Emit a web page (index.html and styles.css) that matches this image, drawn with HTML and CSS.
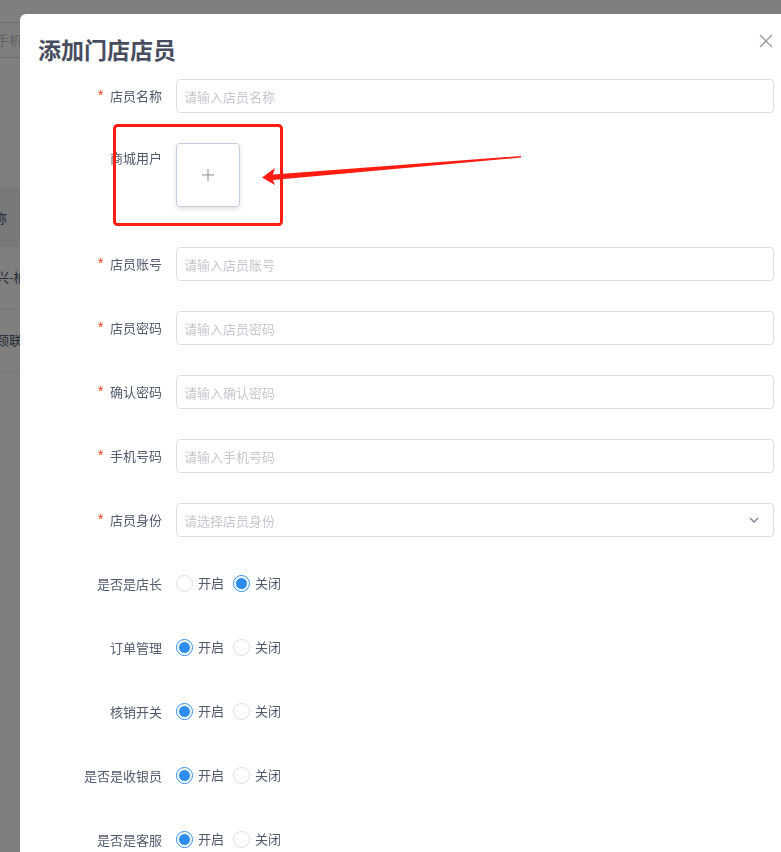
FILE: index.html
```html
<html>

<head>
  <meta charset="UTF-8" />
  <title>添加门店店员</title>
  <link rel="stylesheet" href="styles.css">
</head>

<body>
  <!-- 背景列表页 -->
  <div class="page">
    <div class="search"><span class="ph">手机号</span></div>
    <div class="tabs"></div>
    <div class="table">
      <div class="thead">名称</div>
      <div class="trow">兴-柏</div>
      <div class="trow">颈联</div>
    </div>
  </div>

  <div class="mask">
    <div class="modal">
      <div class="modal-head">
        <span class="modal-title">添加门店店员</span>
        <svg class="close" width="14" height="14" viewBox="0 0 14 14">
          <path d="M1 1L13 13M13 1L1 13" stroke="#9a9a9a" stroke-width="1.3" fill="none" />
        </svg>
      </div>

      <div class="form">
        <div class="form-item">
          <label class="form-label required">店员名称</label>
          <input class="form-input" placeholder="请输入店员名称">
        </div>

        <div class="form-item upload-item">
          <label class="form-label label-top">商城用户</label>
          <div class="upload">
            <svg width="12" height="12" viewBox="0 0 12 12">
              <path d="M6 0V12M0 6H12" stroke="#8a909c" stroke-width="1" fill="none" />
            </svg>
          </div>
        </div>

        <div class="form-item">
          <label class="form-label required">店员账号</label>
          <input class="form-input" placeholder="请输入店员账号">
        </div>

        <div class="form-item">
          <label class="form-label required">店员密码</label>
          <input class="form-input" placeholder="请输入店员密码">
        </div>

        <div class="form-item">
          <label class="form-label required">确认密码</label>
          <input class="form-input" placeholder="请输入确认密码">
        </div>

        <div class="form-item">
          <label class="form-label required">手机号码</label>
          <input class="form-input" placeholder="请输入手机号码">
        </div>

        <div class="form-item">
          <label class="form-label required">店员身份</label>
          <div class="form-input select">
            <span class="placeholder">请选择店员身份</span>
            <svg width="10" height="6" viewBox="0 0 10 6">
              <path d="M1 1L5 5L9 1" stroke="#808695" stroke-width="1.3" fill="none" />
            </svg>
          </div>
        </div>

        <div class="form-item">
          <label class="form-label">是否是店长</label>
          <div class="radio-group">
            <span class="radio"><i class="dot"></i>开启</span>
            <span class="radio"><i class="dot on"></i>关闭</span>
          </div>
        </div>

        <div class="form-item">
          <label class="form-label">订单管理</label>
          <div class="radio-group">
            <span class="radio"><i class="dot on"></i>开启</span>
            <span class="radio"><i class="dot"></i>关闭</span>
          </div>
        </div>

        <div class="form-item">
          <label class="form-label">核销开关</label>
          <div class="radio-group">
            <span class="radio"><i class="dot on"></i>开启</span>
            <span class="radio"><i class="dot"></i>关闭</span>
          </div>
        </div>

        <div class="form-item">
          <label class="form-label">是否是收银员</label>
          <div class="radio-group">
            <span class="radio"><i class="dot on"></i>开启</span>
            <span class="radio"><i class="dot"></i>关闭</span>
          </div>
        </div>

        <div class="form-item">
          <label class="form-label">是否是客服</label>
          <div class="radio-group">
            <span class="radio"><i class="dot on"></i>开启</span>
            <span class="radio"><i class="dot"></i>关闭</span>
          </div>
        </div>
      </div>
    </div>
  </div>

  <!-- 标注：红框和箭头 -->
  <svg class="mark" width="781" height="852" viewBox="0 0 781 852">
    <rect x="114.5" y="125.5" width="167" height="99" rx="3" fill="none" stroke="#ff1d12" stroke-width="3" />
    <polygon points="521,156 273,174.5 275,168 262,177.5 275,185 273,180 521,157.6" fill="#ff1d12" />
  </svg>
</body>

</html>
```

FILE: styles.css
```css
* {
  margin: 0;
  padding: 0;
  box-sizing: border-box;
}

html,
body {
  width: 100%;
  height: 100%;
  overflow: hidden;
  background-color: #fff;
  font-family: "Noto Sans CJK SC", "Noto Sans", sans-serif;
  font-size: 13px;
}

/* 背景页 */
.page {
  margin-left: -8px;
  width: 400px;
}

.search {
  margin-top: 22px;
  height: 36px;
  border: 1px solid #dcdee2;
  border-radius: 4px;
  line-height: 34px;
  padding-left: 3px;
}

.ph {
  color: #c0c4cc;
}

.tabs {
  margin-top: 27px;
  height: 103px;
  background-color: #fdfdfd;
}

.thead,
.trow {
  height: 63px;
  line-height: 60px;
  border-bottom: 1px solid #e8eaec;
  color: #515a6e;
  padding-left: 4px;
}

.thead {
  height: 59px;
  background-color: #eef0f5;
  padding-left: 0;
  text-indent: -11px;
}

.mask {
  position: fixed;
  top: 0;
  left: 0;
  right: 0;
  bottom: 0;
  background-color: rgba(0, 0, 0, 0.5);
  padding: 14px 0 0 20px;
}

.modal {
  width: 761px;
  height: 900px;
  background-color: #fff;
  border-radius: 6px 0 0 0;
}

.modal-head {
  display: flex;
  align-items: flex-start;
  justify-content: space-between;
  padding: 22px 8px 0 18px;
}

.modal-title {
  font-size: 23px;
  line-height: 26px;
  font-weight: 700;
  color: #474d5f;
}

.close {
  margin-top: -2px;
}

.form {
  margin-top: 17px;
}

.form-item {
  display: flex;
  align-items: center;
  height: 34px;
  margin-bottom: 30px;
}

.upload-item {
  align-items: flex-start;
  height: 64px;
  margin-bottom: 40px;
}

.form-label {
  width: 156px;
  padding-right: 14px;
  text-align: right;
  color: #515a6e;
  line-height: 18px;
}

.label-top {
  line-height: 30px;
}

.required::before {
  content: "*";
  color: #ed4014;
  margin-right: 5px;
  font-family: "Liberation Mono", monospace;
  font-size: 14px;
}

.form-input {
  width: 598px;
  height: 34px;
  border: 1px solid #dcdee2;
  border-radius: 4px;
  padding: 0 7px;
  font-family: inherit;
  font-size: 13px;
  color: #515a6e;
  outline: none;
}

.form-input::placeholder,
.placeholder {
  color: #c5c8ce;
}

.select {
  display: flex;
  align-items: center;
  justify-content: space-between;
  padding-right: 14px;
}

.upload {
  width: 64px;
  height: 64px;
  border: 1px solid #c3cddb;
  border-radius: 4px;
  box-shadow: 0 2px 5px rgba(0, 0, 0, 0.12);
  display: flex;
  align-items: center;
  justify-content: center;
}

.radio-group {
  display: flex;
  gap: 9px;
  margin-top: -2px;
}

.radio {
  display: flex;
  align-items: center;
  gap: 5px;
  color: #515a6e;
  line-height: 18px;
}

.dot {
  width: 17px;
  height: 17px;
  border: 1px solid #dcdee2;
  border-radius: 50%;
  display: inline-block;
  position: relative;
}

.dot.on {
  border-color: #2d8cf0;
}

.dot.on::after {
  content: "";
  position: absolute;
  top: 2px;
  left: 2px;
  width: 11px;
  height: 11px;
  border-radius: 50%;
  background-color: #2d8cf0;
}

.mark {
  position: absolute;
  top: 0;
  left: 0;
  pointer-events: none;
}
```
